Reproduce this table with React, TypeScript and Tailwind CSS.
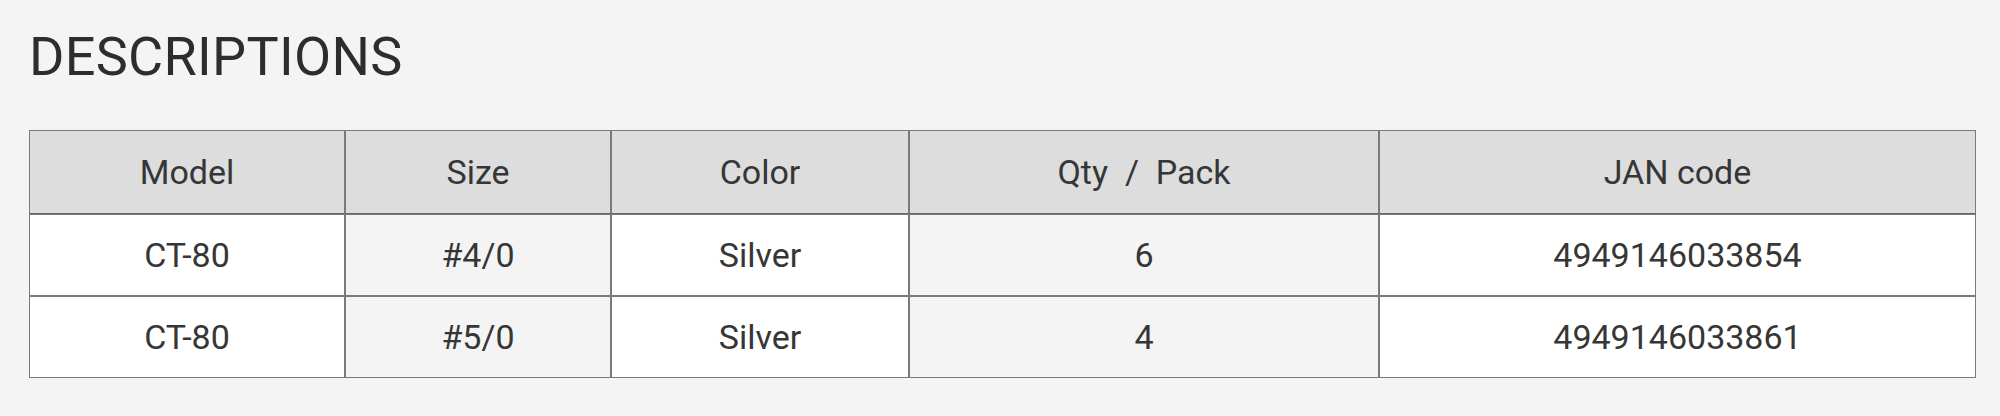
const columns = [
  { label: 'Model', width: 'w-[316px]', bg: 'bg-white' },
  { label: 'Size', width: 'w-[266px]', bg: 'bg-[#f4f4f4]' },
  { label: 'Color', width: 'w-[298px]', bg: 'bg-white' },
  { label: 'Qty / Pack', width: 'w-[470px]', bg: 'bg-[#f4f4f4]' },
  { label: 'JAN code', width: 'w-[597px]', bg: 'bg-white' },
];

const rows = [
  ['CT-80', '#4/0', 'Silver', '6', '4949146033854'],
  ['CT-80', '#5/0', 'Silver', '4', '4949146033861'],
];

export default function App() {
  return (
    <div className="min-h-[416px] bg-[#f4f4f4] pl-[29px] pt-[30px] font-['Roboto',sans-serif] text-[#333333]">
      <h2 className="text-[54px] leading-none font-normal tracking-[0.3px] text-[#2d2d2d]">DESCRIPTIONS</h2>

      <table className="mt-[46px] border-separate border-spacing-0 table-fixed w-[1947px] text-[34px] text-[#363636]">
        <thead>
          <tr className="h-[84px]">
            {columns.map((col) => (
              <th
                key={col.label}
                className={`${col.width} border border-[#7a7a7a] border-b-[#666666] bg-[#dddddd] font-normal text-center whitespace-pre`}
              >
                {col.label === 'Qty / Pack' ? 'Qty  /  Pack' : col.label}
              </th>
            ))}
          </tr>
        </thead>
        <tbody>
          {rows.map((row, i) => (
            <tr key={i} className="h-[82px]">
              {row.map((cell, j) => (
                <td key={j} className={`${columns[j].bg} border border-[#7a7a7a] text-center`}>
                  {cell}
                </td>
              ))}
            </tr>
          ))}
        </tbody>
      </table>
    </div>
  );
}
